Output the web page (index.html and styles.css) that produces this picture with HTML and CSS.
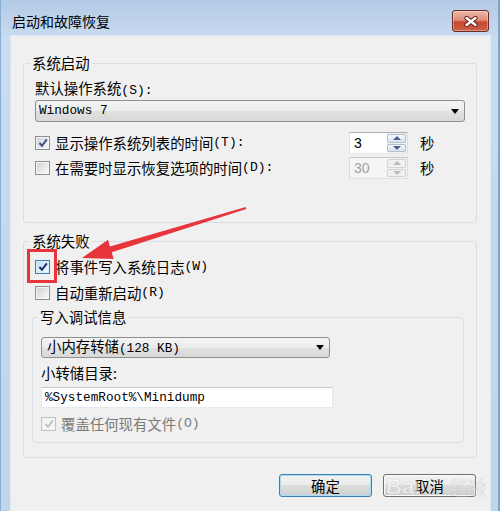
FILE: index.html
```html
<!DOCTYPE html>
<html lang="zh-CN">
<head>
<meta charset="utf-8">
<title>启动和故障恢复</title>
<link rel="stylesheet" href="styles.css">
</head>
<body>
<div class="window">
  <div class="titlebar">
    <span class="title">启动和故障恢复</span>
    <button class="close" type="button" aria-label="关闭">
      <svg width="14" height="11" viewBox="0 0 14 11">
        <path d="M2.5 2 L11.5 9 M11.5 2 L2.5 9" stroke="#5a1b12" stroke-width="4.2" stroke-linecap="round"/>
        <path d="M2.5 2 L11.5 9 M11.5 2 L2.5 9" stroke="#fff" stroke-width="2.4" stroke-linecap="round"/>
      </svg>
    </button>
  </div>
  <div class="client">
    <fieldset class="group g1">
      <legend>系统启动</legend>
      <div class="gbody">
        <div class="label">默认操作系统<span class="acc">(S):</span></div>
        <div class="combo wide">
          <span class="combo-text mono">Windows 7</span>
          <svg class="combo-arrow" width="8" height="5" viewBox="0 0 8 5"><path d="M0 0 H8 L4 5 Z" fill="#000"/></svg>
        </div>
        <div class="row r1">
          <label class="check"><span class="cb"><svg width="10" height="10" viewBox="0 0 10 10"><path d="M1.4 5 L4 7.8 L8.8 1.4" fill="none" stroke="#3b4f82" stroke-width="2"/></svg></span>显示操作系统列表的时间<span class="acc">(T):</span></label>
          <div class="spin"><span class="spin-val">3</span><span class="spin-btns"><span class="sb up"></span><span class="sb down"></span></span></div>
          <span class="unit">秒</span>
        </div>
        <div class="row r2">
          <label class="check"><span class="cb"></span>在需要时显示恢复选项的时间<span class="acc">(D):</span></label>
          <div class="spin disabled"><span class="spin-val">30</span><span class="spin-btns"><span class="sb up"></span><span class="sb down"></span></span></div>
          <span class="unit">秒</span>
        </div>
      </div>
    </fieldset>

    <fieldset class="group g2">
      <legend>系统失败</legend>
      <div class="gbody">
        <div class="row indent">
          <label class="check"><span class="cb hot"><svg width="10" height="10" viewBox="0 0 10 10"><path d="M1.4 5 L4 7.8 L8.8 1.4" fill="none" stroke="#1c2f6e" stroke-width="2"/></svg></span>将事件写入系统日志<span class="acc">(W)</span></label>
        </div>
        <div class="row indent r2b">
          <label class="check"><span class="cb"></span>自动重新启动<span class="acc">(R)</span></label>
        </div>
        <fieldset class="group g3">
          <legend>写入调试信息</legend>
          <div class="gbody">
            <div class="combo small">
              <span class="combo-text">小内存转储<span class="mono">(128 KB)</span></span>
              <svg class="combo-arrow" width="8" height="5" viewBox="0 0 8 5"><path d="M0 0 H8 L4 5 Z" fill="#000"/></svg>
            </div>
            <div class="label lbl2">小转储目录:</div>
            <div class="text mono">%SystemRoot%\Minidump</div>
            <div class="row r3">
              <label class="check disabled"><span class="cb off"><svg width="10" height="10" viewBox="0 0 10 10"><path d="M1.4 5 L4 7.8 L8.8 1.4" fill="none" stroke="#b9b9b9" stroke-width="1.6"/></svg></span>覆盖任何现有文件<span class="acc">(O)</span></label>
            </div>
          </div>
        </fieldset>
      </div>
    </fieldset>

    <div class="buttons">
      <button class="btn default" type="button">确定</button>
      <button class="btn" type="button">取消</button>
    </div>
  </div>
</div>

<div class="watermark"><span class="wm-bai">Bai</span><span class="wm-jy">经验</span></div>

<svg class="annot" width="500" height="511" viewBox="0 0 500 511">
  <rect x="28.5" y="250.5" width="27" height="31" fill="none" stroke="#e8353b" stroke-width="3"/>
  <polygon points="245.7,207 109.9,246.5 108,239.8 82,258 113.6,259 111.7,252.3 246.3,209" fill="#e8353b"/>
</svg>
</body>
</html>
```

FILE: styles.css
```css
* { box-sizing: border-box; }
html, body { margin: 0; padding: 0; }
body {
  position: relative;
  width: 500px;
  height: 511px;
  overflow: hidden;
  font-family: "Noto Sans CJK SC", sans-serif;
  font-size: 14.4px;
  color: #000;
  background: #c4d8ee;
}

.window {
  width: 500px;
  height: 511px;
  display: flex;
  flex-direction: column;
  background: linear-gradient(180deg, #b3cbe6 0, #c9dcf0 40px, #bfd5ec 100%);
  border-left: 1px solid #8aadd3;
  border-right: 2px solid #7ea4cc;
}

.titlebar {
  flex: none;
  height: 35px;
  display: flex;
  align-items: center;
  justify-content: space-between;
  padding: 7px 9px 0 11px;
}
.title { font-size: 14px; line-height: 20px; }
.close {
  width: 37px;
  height: 22px;
  padding: 0;
  display: flex;
  align-items: center;
  justify-content: center;
  border: 1px solid #6c2a22;
  border-radius: 3px;
  background: linear-gradient(180deg, #ecb6a8 0, #de907b 45%, #c74a32 55%, #cd5d43 100%);
  box-shadow: inset 0 0 0 1px rgba(255, 255, 255, 0.35);
}

.client {
  flex: 1;
  margin: 0 7px 0 9px;
  background: #f0f0f0;
  border: 1px solid #dfe8f2;
  border-bottom: none;
  padding: 17px 13px 0 12px;
}

.group {
  margin: 0;
  padding: 0;
  min-width: 0;
  border: 1px solid #d5dfe5;
  border-radius: 3px;
}
.group legend {
  margin-left: 6px;
  padding: 0 2px;
  line-height: 20px;
  font-size: 14.4px;
}
.g1 .gbody { padding: 5px 11px 43px 11px; }
.g2 { margin-top: 8px; }
.g2 > .gbody { padding: 5px 12px 14px 8px; }
.g3 { margin-top: 3px; }
.g3 legend { margin-left: 5px; }
.g3 .gbody { padding: 10px 8px 7px 8px; }

.label { height: 20px; line-height: 20px; white-space: nowrap; }
.lbl2 { margin-top: 5px; }
.acc { font-family: "Liberation Mono", monospace; font-size: 13px; }
.mono { font-family: "Liberation Mono", monospace; font-size: 12.7px; }

.combo {
  height: 22px;
  display: flex;
  align-items: center;
  justify-content: space-between;
  border: 1px solid #8e8f8f;
  border-radius: 3px;
  background: linear-gradient(180deg, #f4f4f4 0, #ececec 50%, #e1e1e1 50%, #d8d8d8 100%);
  padding: 0 5px 0 3px;
  white-space: nowrap;
}
.combo.wide { margin-top: 2px; }
.combo.small { width: 289px; height: 21px; padding-left: 5px; }
.combo-text { line-height: 20px; }
.combo-arrow { flex: none; }

.row { display: flex; align-items: center; height: 22px; }
.r1 { margin-top: 10px; }
.r2 { margin-top: 3px; }
.indent { margin-left: 3px; }
.r2b { margin-top: 4px; }
.r3 { margin-top: 5px; }

.check {
  flex: 1;
  display: flex;
  align-items: center;
  line-height: 20px;
  white-space: nowrap;
}
.check.disabled { color: #7a7a7a; }
.cb {
  flex: none;
  width: 15px;
  height: 14px;
  margin-right: 5px;
  display: flex;
  align-items: center;
  justify-content: center;
  border: 1px solid #8e8f8f;
  background: linear-gradient(135deg, #c9ccd1 0, #e9e9ea 55%, #fafafa 100%);
  box-shadow: inset 0 0 0 1px #f6f6f6;
}
.cb.hot {
  border-color: #3c7fb1;
  background: linear-gradient(135deg, #b2dcf3 0, #dff1fb 60%, #f2f9fe 100%);
  box-shadow: inset 0 0 0 1px #def0fa;
}
.cb.off {
  border-color: #c2c2c2;
  background: #f4f4f4;
  box-shadow: none;
}

.spin {
  flex: none;
  width: 59px;
  height: 22px;
  display: flex;
  border: 1px solid #abadb3;
  border-color: #abadb3 #dbdfe6 #e3e9ef #e2e3ea;
  background: #fff;
}
.spin-val {
  flex: 1;
  padding-left: 4px;
  line-height: 20px;
  font-family: "Liberation Sans", sans-serif;
  font-size: 14px;
}
.spin-btns {
  width: 20px;
  display: flex;
  flex-direction: column;
  gap: 1px;
  padding: 1px 1px 1px 0;
  background: #f0f0f0;
}
.sb {
  position: relative;
  flex: 1;
  border: 1px solid #b3bfcf;
  border-radius: 2px;
  background: linear-gradient(180deg, #f4f8fc, #dae3ee);
}
.sb::after {
  content: "";
  position: absolute;
  left: 50%;
  top: 50%;
  margin-left: -4px;
  border-left: 4px solid transparent;
  border-right: 4px solid transparent;
}
.sb.up::after { margin-top: -2px; border-bottom: 4px solid #4b5f88; }
.sb.down::after { margin-top: -2px; border-top: 4px solid #4b5f88; }
.spin.disabled { background: #f4f4f4; border-color: #c9c9c9 #dcdcdc #e2e2e2 #dcdcdc; }
.spin.disabled .spin-val { color: #a3a3a3; }
.spin.disabled .sb { border-color: #d3d3d3; background: #f0f0f0; }
.spin.disabled .sb.up::after { border-bottom-color: #b8b8b8; }
.spin.disabled .sb.down::after { border-top-color: #b8b8b8; }
.unit { flex: none; width: 45px; margin-left: 12px; line-height: 20px; }

.text {
  width: 292px;
  height: 21px;
  margin-top: 4px;
  padding-left: 3px;
  line-height: 19px;
  background: #fff;
  border: 1px solid #abadb3;
  border-color: #c5c7cc #e3e6ea #e6e9ee #e3e6ea;
  white-space: nowrap;
}

.buttons {
  display: flex;
  justify-content: flex-end;
  gap: 11px;
  margin: 16px 1px 0 0;
}
.btn {
  width: 93px;
  height: 23px;
  padding: 0;
  font-family: "Noto Sans CJK SC", sans-serif;
  font-size: 14.4px;
  line-height: 20px;
  color: #000;
  border: 1px solid #707070;
  border-radius: 3px;
  background: linear-gradient(180deg, #f2f2f2 0, #ebebeb 50%, #dddddd 50%, #cfcfcf 100%);
  box-shadow: inset 0 0 0 1px #fbfbfb;
}
.btn.default {
  border-color: #3c7fb1;
  box-shadow: inset 0 0 0 1px #a9dcf5;
}

.watermark {
  position: absolute;
  left: 386px;
  top: 474px;
  display: flex;
  align-items: center;
  pointer-events: none;
  color: rgba(255, 255, 255, 0.5);
  -webkit-text-stroke: 0.5px rgba(160, 160, 160, 0.4);
}
.wm-bai { font-family: "Liberation Sans", sans-serif; font-weight: bold; font-size: 22px; line-height: 26px; }
.wm-jy { font-size: 18px; line-height: 26px; margin-left: 30px; }

.annot { position: absolute; left: 0; top: 0; pointer-events: none; }
```
